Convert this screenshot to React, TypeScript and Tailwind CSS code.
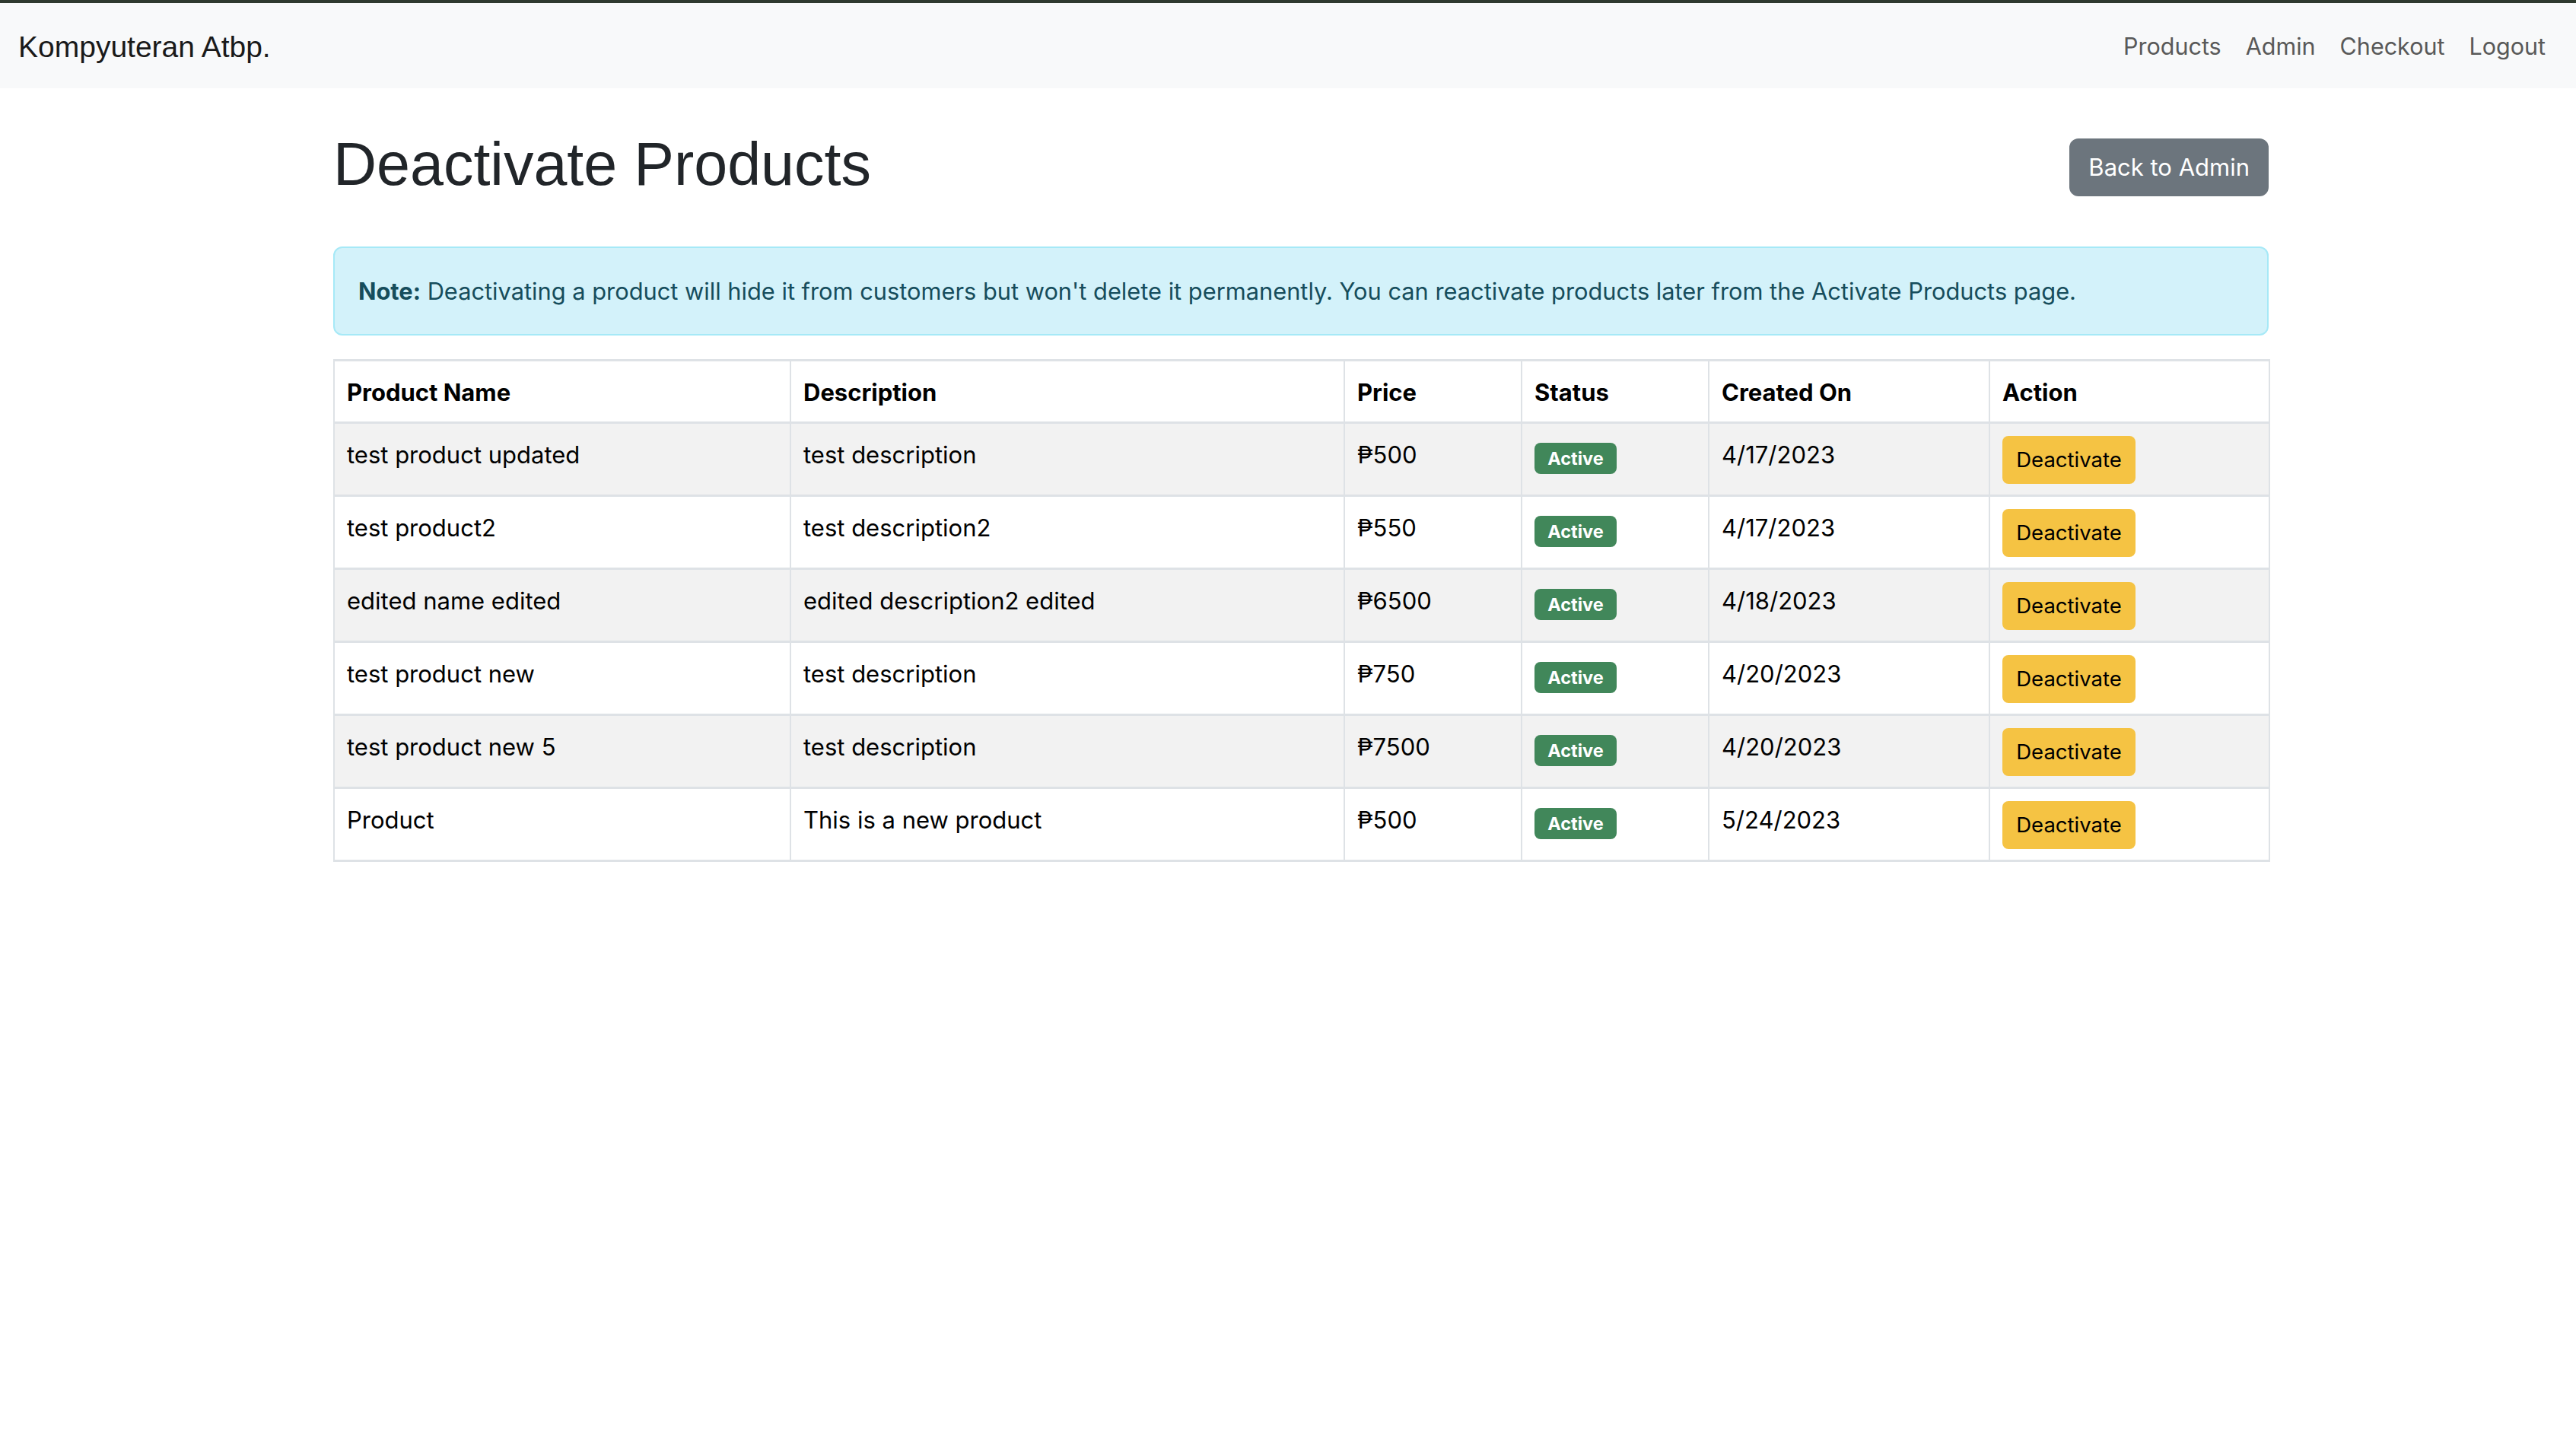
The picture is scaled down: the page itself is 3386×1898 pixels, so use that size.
import React from 'react';

type Product = {
  name: string;
  description: string;
  price: string;
  created: string;
};

const products: Product[] = [
  { name: 'test product updated', description: 'test description', price: '₱500', created: '4/17/2023' },
  { name: 'test product2', description: 'test description2', price: '₱550', created: '4/17/2023' },
  { name: 'edited name edited', description: 'edited description2 edited', price: '₱6500', created: '4/18/2023' },
  { name: 'test product new', description: 'test description', price: '₱750', created: '4/20/2023' },
  { name: 'test product new 5', description: 'test description', price: '₱7500', created: '4/20/2023' },
  { name: 'Product', description: 'This is a new product', price: '₱500', created: '5/24/2023' },
];

const sans = "font-['Inter','Noto_Sans',sans-serif]";
const helv = "font-['Liberation_Sans','Arial',sans-serif]";

const cell = 'px-[16px] pt-[17px] border-x-2 border-y-[3px] border-[#dee2e6] align-top';

export default function App() {
  return (
    <div className={`min-h-[1898px] bg-white border-t-4 border-[#2f3a2f] ${sans}`}>
      {/* Navbar */}
      <nav className="h-[112px] bg-[#f8f9fa] flex items-center justify-between pl-[24px] pr-[24px] pt-[2px]">
        <span className={`${helv} text-[39px] text-[#1a1a1a] leading-none`}>Kompyuteran Atbp.</span>
        <div className="flex items-center text-[30.5px] text-[#595959]">
          {['Products', 'Admin', 'Checkout', 'Logout'].map((link) => (
            <a key={link} href="#" className="px-[16px]">
              {link}
            </a>
          ))}
        </div>
      </nav>

      <div className="w-[2544px] ml-[438px] pt-[53px]">
        {/* Header */}
        <div className="flex items-center justify-between h-[94px] mb-[61px]">
          <h1 className={`${helv} text-[79px] font-medium text-[#212529] leading-[94px]`}>Deactivate Products</h1>
          <button className="h-[76px] mt-[8px] px-[25px] rounded-[12px] bg-[#6c757d] text-white text-[31px]">
            Back to Admin
          </button>
        </div>

        {/* Info alert */}
        <div className="border-2 border-[#a6e9f7] bg-[#d3f2fa] rounded-[12px] px-[31px] py-[33px] text-[30.8px] leading-[47px] text-[#164d5c] mb-[31px]">
          <span className="font-bold">Note:</span> Deactivating a product will hide it from customers but won't delete it
          permanently. You can reactivate products later from the Activate Products page.
        </div>

        {/* Products table */}
        <table className="w-full table-fixed border-collapse text-[31px] leading-[47px] text-black">
          <colgroup>
            <col className="w-[600px]" />
            <col className="w-[728px]" />
            <col className="w-[233px]" />
            <col className="w-[246px]" />
            <col className="w-[369px]" />
            <col className="w-[368px]" />
          </colgroup>
          <thead>
            <tr>
              {['Product Name', 'Description', 'Price', 'Status', 'Created On', 'Action'].map((h) => (
                <th key={h} className={`text-left font-bold pb-[15px] ${cell}`}>
                  {h}
                </th>
              ))}
            </tr>
          </thead>
          <tbody>
            {products.map((p, i) => (
              <tr key={i} className={i % 2 === 0 ? 'bg-[#f2f2f2]' : 'bg-white'}>
                <td className={`pb-[14px] ${cell}`}>{p.name}</td>
                <td className={`pb-[14px] ${cell}`}>{p.description}</td>
                <td className={`pb-[14px] ${cell}`}>{p.price}</td>
                <td className={`pb-[14px] ${cell}`}>
                  <span className="inline-flex items-center justify-center mt-[8px] w-[108px] h-[41px] rounded-[8px] bg-[#41875a] text-white text-[23.5px] font-bold leading-none">
                    Active
                  </span>
                </td>
                <td className={`pb-[14px] ${cell}`}>{p.created}</td>
                <td className={`pb-[14px] ${cell}`}>
                  <button className="block w-[175px] h-[63px] -mt-[1px] rounded-[8px] bg-[#f5c343] text-black text-[27.5px] leading-none">
                    Deactivate
                  </button>
                </td>
              </tr>
            ))}
          </tbody>
        </table>
      </div>
    </div>
  );
}
